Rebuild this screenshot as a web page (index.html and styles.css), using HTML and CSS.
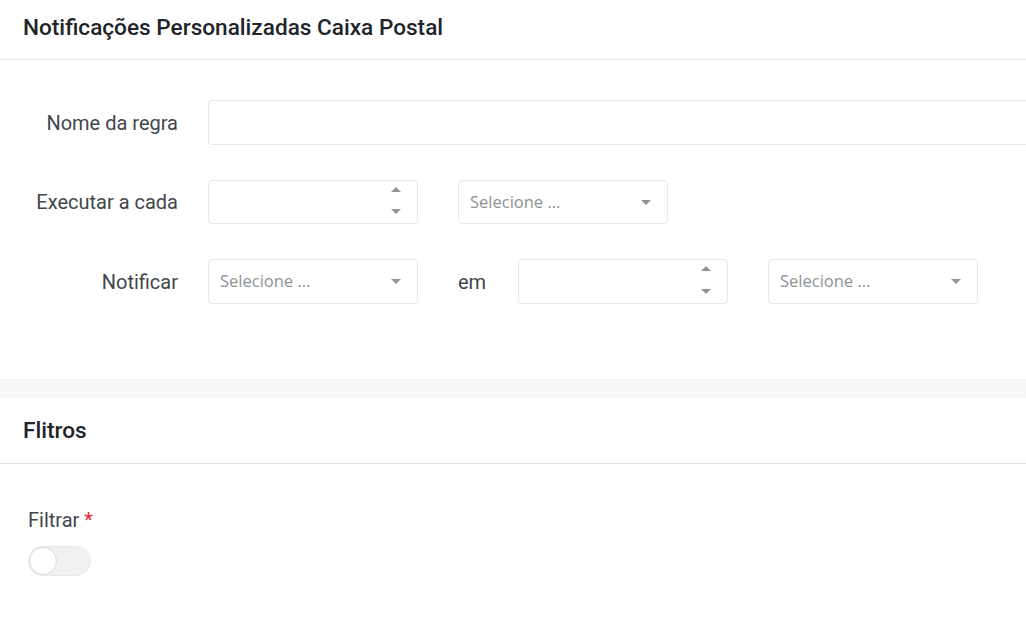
FILE: index.html
```html
<!doctype html>
<html>
<head>
<meta charset="utf-8">
<title>Notificações Personalizadas Caixa Postal</title>
<link rel="stylesheet" href="styles.css">
</head>
<body>
<div class="page">
	<div class="card">
		<div class="card-head"><h2>Notificações Personalizadas Caixa Postal</h2></div>
		<div class="card-body form">
			<div class="row">
				<label class="lbl">Nome da regra</label>
				<div class="field wide"></div>
			</div>
			<div class="row">
				<label class="lbl">Executar a cada</label>
				<div class="field num"><span class="up"></span><span class="down"></span></div>
				<div class="field sel"><span class="ph">Selecione ...</span><span class="caret"></span></div>
			</div>
			<div class="row">
				<label class="lbl">Notificar</label>
				<div class="field sel"><span class="ph">Selecione ...</span><span class="caret"></span></div>
				<span class="em">em</span>
				<div class="field num"><span class="up"></span><span class="down"></span></div>
				<div class="field sel"><span class="ph">Selecione ...</span><span class="caret"></span></div>
			</div>
		</div>
	</div>
	<div class="band"></div>
	<div class="card">
		<div class="card-head tall"><h2>Flitros</h2></div>
		<div class="card-body filter">
			<div class="flbl">Filtrar <span class="req">*</span></div>
			<div class="switch"><span class="knob"></span></div>
		</div>
	</div>
</div>
</body>
</html>
```
FILE: styles.css
```css
*{ margin:0; padding:0; box-sizing:border-box;}
body{ background:#fff; overflow:hidden; font-family:Roboto, "Liberation Sans", sans-serif; color:#41464b;}
.page{ width:100%;}
.card{ background:#fff;}
.card-head{ height:60px; border-bottom:1px solid #e3e3e3; padding:0 23px; display:flex; align-items:center;}
.card-head.tall{ height:66px;}
.card-head h2{ font-size:22.6px; font-weight:500; color:#212529; margin-top:-5px;}
.card-head.tall h2{ margin-top:0;}
.form{ padding:40px 0 75px 0;}
.row{ display:flex; align-items:center; gap:0 40px; height:44px; margin-bottom:35px;}
.row:first-child{ height:45px;}
.row:last-child{ margin-bottom:0; height:45px;}
.lbl{ width:178px; margin-right:-10px; text-align:right; font-size:20px;}
.field{ height:100%; border:1px solid #e6e7e9; border-radius:4px; position:relative; background:#fff;}
.wide{ flex:1; border-right:none; border-radius:4px 0 0 4px;}
.num,.sel{ width:210px;}
.num .up,.num .down,.sel .caret{ position:absolute; width:0; height:0; border-left:5px solid transparent; border-right:5px solid transparent;}
.num .up{ right:16px; top:6px; border-bottom:5px solid #8f959a;}
.num .down{ right:16px; bottom:9px; border-top:5px solid #8f959a;}
.sel .caret{ right:16px; top:19px; border-top:5px solid #8f959a;}
.ph{ display:block; padding-left:11px; line-height:42px; font-family:"Open Sans", "Liberation Sans", sans-serif; font-size:16.5px; color:#8d9296;}
.em{ width:20px; font-size:20px; white-space:nowrap;}
.band{ height:19px; background:#f7f8fa; box-shadow:inset 0 2px 3px rgba(0,0,0,0.025);}
.filter{ padding:44px 28px 50px;}
.flbl{ font-size:20px; line-height:24px;}
.req{ color:#e0283a;}
.switch{ margin-top:14px; width:63px; height:30px; border-radius:15px; background:#f1f1f2; border:1px solid #e6e8ea; position:relative;}
.knob{ position:absolute; left:0; top:0; width:28px; height:28px; border-radius:50%; background:#fff; border:1px solid #d6e1e5; box-shadow:0 0 1px rgba(0,0,0,0.05);}
```
